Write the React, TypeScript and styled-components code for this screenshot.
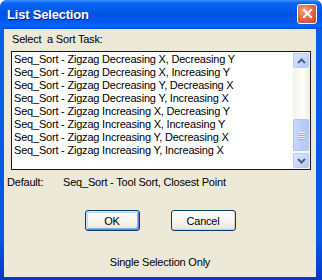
import React from 'react';
import styled, { createGlobalStyle } from 'styled-components';

const GlobalStyle = createGlobalStyle`
  html, body {
    margin: 0;
    padding: 0;
    background: #ffffff;
  }
  body {
    font-family: "Liberation Sans", Arial, sans-serif;
    font-size: 11px;
  }
`;

const Window = styled.div`
  width: 322px;
  height: 280px;
  display: flex;
  flex-direction: column;
  box-sizing: border-box;
  padding: 0 6px 3px 4px;
  background: linear-gradient(180deg, #0a5fe6 0%, #0758e6 85%, #0638c8 100%);
  border-radius: 7px 7px 0 0;
`;

const TitleBar = styled.div`
  height: 29px;
  margin: 0 -6px 0 -4px;
  padding: 0 5px 0 7px;
  display: flex;
  align-items: center;
  justify-content: space-between;
  border-radius: 7px 7px 0 0;
  background: linear-gradient(
    180deg,
    #3d95ff 0%,
    #0a66f6 10%,
    #0054e3 45%,
    #0058ee 75%,
    #0066ff 88%,
    #0050dc 100%
  );
`;

const Title = styled.span`
  color: #ffffff;
  font-weight: 700;
  font-size: 13px;
  text-shadow: 1px 1px 0 #0a1d8a;
  letter-spacing: -0.2px;
  padding-bottom: 1px;
`;

const CloseButton = styled.div`
  width: 20px;
  height: 20px;
  box-sizing: border-box;
  border: 1px solid #ffffff;
  border-radius: 3px;
  background: radial-gradient(circle at 35% 30%, #f0a585 0%, #e26b45 45%, #c8431b 100%);
  display: flex;
  align-items: center;
  justify-content: center;
  margin-bottom: 2px;
`;

const Client = styled.div`
  flex: 1;
  background: #ece9d8;
  display: flex;
  flex-direction: column;
  padding: 4px 0 0 0;
  color: #000000;
  letter-spacing: -0.2px;
`;

const Prompt = styled.div`
  line-height: 13px;
  padding-left: 8px;
  white-space: pre;
`;

const ListBox = styled.div`
  margin: 5px 5px 0 7px;
  height: 119px;
  box-sizing: border-box;
  border: 1px solid #1a1a1a;
  background: #ffffff;
  display: flex;
`;

const Items = styled.ul`
  flex: 1;
  list-style: none;
  margin: 0;
  padding: 1px 0 0 2px;
  overflow: hidden;
`;

const Item = styled.li`
  line-height: 13px;
  height: 13px;
  white-space: nowrap;
`;

const ScrollBar = styled.div`
  width: 17px;
  display: flex;
  flex-direction: column;
  background: linear-gradient(90deg, #f3f1ea 0%, #fdfdfb 60%, #eeede5 100%);
`;

const ArrowButton = styled.div`
  height: 15px;
  margin: 1px 1px 1px 0;
  box-sizing: border-box;
  border: 1px solid #b9cbf3;
  border-radius: 2px;
  background: linear-gradient(135deg, #dde8fe 0%, #c5d6fc 60%, #b4c8f6 100%);
  display: flex;
  align-items: center;
  justify-content: center;
`;

const Track = styled.div`
  flex: 1;
  display: flex;
  flex-direction: column;
  justify-content: flex-end;
`;

const Thumb = styled.div`
  height: 32px;
  margin: 0 1px 1px 0;
  box-sizing: border-box;
  border: 1px solid #b0c4f4;
  border-radius: 2px;
  background: linear-gradient(90deg, #c9d8fd 0%, #bccefa 50%, #b4c7f5 100%);
  display: flex;
  flex-direction: column;
  align-items: center;
  justify-content: center;
  gap: 1px;
`;

const Grip = styled.span`
  width: 7px;
  height: 1px;
  background: #eef4fe;
  box-shadow: 0 1px 0 #8faaf0;
`;

const DefaultRow = styled.div`
  display: grid;
  grid-template-columns: 56px auto;
  padding-left: 3px;
  margin-top: 6px;
  line-height: 13px;
`;

const ButtonRow = styled.div`
  display: flex;
  justify-content: center;
  gap: 31px;
  margin-top: 21px;
`;

const Button = styled.div<{ $width: number; $default?: boolean }>`
  width: ${p => p.$width}px;
  height: 21px;
  box-sizing: border-box;
  border: 1px solid #003c74;
  border-radius: 3px;
  background: linear-gradient(180deg, #ffffff 0%, #f5f4ef 60%, #e3e2da 100%);
  display: flex;
  align-items: center;
  justify-content: center;
  font-size: 11px;
  box-shadow: ${p =>
    p.$default
      ? 'inset 1px 1px 0 #cee7ff, inset -1px -1px 0 #6982ee, inset 2px 2px 0 #bcd4f6, inset -2px -2px 0 #89adec'
      : 'inset -1px -1px 0 #d6d0c5'};
`;

const Footer = styled.div`
  text-align: center;
  margin-top: 25px;
  line-height: 13px;
`;

const Chevron: React.FC<{ up?: boolean }> = ({ up }) => (
  <svg width="9" height="6" viewBox="0 0 9 6">
    <path
      d={up ? 'M1 5 L4.5 1.5 L8 5' : 'M1 1 L4.5 4.5 L8 1'}
      fill="none"
      stroke="#4d6185"
      strokeWidth="2"
    />
  </svg>
);

const items = [
  'Seq_Sort - Zigzag Decreasing X, Decreasing Y',
  'Seq_Sort - Zigzag Decreasing X, Increasing Y',
  'Seq_Sort - Zigzag Decreasing Y, Decreasing X',
  'Seq_Sort - Zigzag Decreasing Y, Increasing X',
  'Seq_Sort - Zigzag Increasing X, Decreasing Y',
  'Seq_Sort - Zigzag Increasing X, Increasing Y',
  'Seq_Sort - Zigzag Increasing Y, Decreasing X',
  'Seq_Sort - Zigzag Increasing Y, Increasing X',
];

const App: React.FC = () => (
  <>
    <GlobalStyle />
    <Window>
      <TitleBar>
        <Title>List Selection</Title>
        <CloseButton>
          <svg width="11" height="11" viewBox="0 0 11 11">
            <path d="M2 2 L9 9 M9 2 L2 9" stroke="#ffffff" strokeWidth="2.2" strokeLinecap="square" />
          </svg>
        </CloseButton>
      </TitleBar>
      <Client>
        <Prompt>Select  a Sort Task:</Prompt>
        <ListBox>
          <Items>
            {items.map(t => (
              <Item key={t}>{t}</Item>
            ))}
          </Items>
          <ScrollBar>
            <ArrowButton>
              <Chevron up />
            </ArrowButton>
            <Track>
              <Thumb>
                <Grip />
                <Grip />
                <Grip />
                <Grip />
              </Thumb>
            </Track>
            <ArrowButton>
              <Chevron />
            </ArrowButton>
          </ScrollBar>
        </ListBox>
        <DefaultRow>
          <span>Default:</span>
          <span>Seq_Sort - Tool Sort, Closest Point</span>
        </DefaultRow>
        <ButtonRow>
          <Button $width={55} $default>OK</Button>
          <Button $width={65}>Cancel</Button>
        </ButtonRow>
        <Footer>Single Selection Only</Footer>
      </Client>
    </Window>
  </>
);

export default App;
